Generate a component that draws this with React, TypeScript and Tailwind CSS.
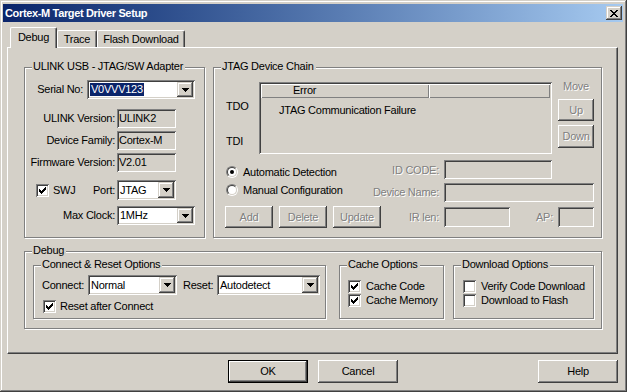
import type { ReactNode } from 'react';

// classic win2000 bevels
const raised = 'bg-[#d4d0c8] shadow-[inset_-1px_-1px_#404040,inset_1px_1px_#fff,inset_-2px_-2px_#808080]';
const raisedSoft = 'bg-[#d4d0c8] shadow-[inset_-1px_-1px_#404040,inset_1px_1px_#d4d0c8,inset_-2px_-2px_#808080,inset_2px_2px_#fff]';
const sunken = 'shadow-[inset_1px_1px_#808080,inset_-1px_-1px_#fff,inset_2px_2px_#404040,inset_-2px_-2px_#d4d0c8]';
const grayText = 'text-[#808080] [text-shadow:1px_1px_0_#fff]';

const CheckMark = () => (
  <svg width="7" height="7" viewBox="0 0 7 7" shapeRendering="crispEdges">
    {[2, 3, 4, 3, 2, 1, 0].map((y, x) => (
      <rect key={x} x={x} y={y} width="1" height="3" fill="#000" />
    ))}
  </svg>
);

const Arrow = () => (
  <svg width="7" height="4" viewBox="0 0 7 4" shapeRendering="crispEdges">
    {[0, 1, 2, 3].map((r) => (
      <rect key={r} x={r} y={r} width={7 - 2 * r} height="1" fill="#000" />
    ))}
  </svg>
);

const CloseGlyph = () => (
  <svg width="8" height="7" viewBox="0 0 8 7" shapeRendering="crispEdges">
    {[
      [0, 0, 2], [6, 0, 2],
      [1, 1, 2], [5, 1, 2],
      [2, 2, 4],
      [3, 3, 2],
      [2, 4, 4],
      [1, 5, 2], [5, 5, 2],
      [0, 6, 2], [6, 6, 2],
    ].map(([x, y, w], i) => (
      <rect key={i} x={x} y={y} width={w} height="1" fill="#000" />
    ))}
  </svg>
);

const Check = ({ checked = false }: { checked?: boolean }) => (
  <span className={`flex h-[13px] w-[13px] shrink-0 items-center justify-center bg-white ${sunken}`}>
    {checked && <CheckMark />}
  </span>
);

const Radio = ({ checked = false }: { checked?: boolean }) => (
  <span className="flex h-[12px] w-[12px] shrink-0 rounded-full border border-t-[#808080] border-l-[#808080] border-r-white border-b-white">
    <span className="flex flex-1 items-center justify-center rounded-full border border-t-[#404040] border-l-[#404040] border-r-[#d4d0c8] border-b-[#d4d0c8] bg-white">
      {checked && <span className="h-[4px] w-[4px] rounded-full bg-black" />}
    </span>
  </span>
);

const Group = ({ label, className, children }: { label: string; className: string; children?: ReactNode }) => (
  <div className={`relative shrink-0 border border-[#808080] shadow-[inset_1px_1px_#fff,1px_1px_#fff] ${className}`}>
    <span className="absolute left-[7px] top-[-8px] whitespace-nowrap bg-[#d4d0c8] pl-[1px] pr-[2px]">{label}</span>
    {children}
  </div>
);

const Combo = ({ className, children }: { className: string; children: ReactNode }) => (
  <div className={`flex shrink-0 items-stretch bg-white p-[2px] ${sunken} ${className}`}>
    <div className="flex flex-1 items-center overflow-hidden whitespace-nowrap pl-[1px]">{children}</div>
    <div className={`flex w-[16px] items-center justify-center ${raisedSoft}`}>
      <Arrow />
    </div>
  </div>
);

const Field = ({ className, children }: { className: string; children?: ReactNode }) => (
  <div className={`flex shrink-0 items-center bg-[#d4d0c8] pl-[2px] ${sunken} ${className}`}>{children}</div>
);

const Btn = ({ className, disabled = false, children }: { className: string; disabled?: boolean; children: ReactNode }) => (
  <div className={`flex shrink-0 items-center justify-center ${raised} ${disabled ? grayText : ''} ${className}`}>
    {children}
  </div>
);

export default function App() {
  return (
    <div className="h-[392px] w-[627px] overflow-hidden bg-[#d4d0c8] pl-[3px] pr-[4px] pt-[4px] font-['Liberation_Sans',Arial,sans-serif] text-[11px] leading-[13px] tracking-[-0.25px] text-black shadow-[inset_-1px_-1px_#404040,inset_1px_1px_#d4d0c8,inset_-2px_-2px_#808080,inset_2px_2px_#fff] select-none">
      {/* title bar */}
      <div className="flex h-[18px] items-center justify-between bg-gradient-to-r from-[#0a246a] to-[#a6caf0] pl-[2px]">
        <span className="font-bold tracking-[-0.35px] text-white">Cortex-M Target Driver Setup</span>
        <div className={`mr-[1px] flex h-[14px] w-[16px] items-center justify-center ${raisedSoft}`}>
          <CloseGlyph />
        </div>
      </div>

      {/* tabs */}
      <div className="ml-[7px] mt-[5px] flex h-[20px] items-end">
        <div className="relative z-10 -mb-[1px] flex h-[21px] w-[47px] justify-center rounded-tl-[2px] rounded-tr-[2px] border-l border-t border-r border-l-white border-t-white border-r-[#404040] bg-[#d4d0c8] pt-[3px] shadow-[inset_-1px_0_#808080]">
          Debug
        </div>
        <div className="flex h-[17px] w-[40px] justify-center rounded-tl-[2px] rounded-tr-[2px] border-l border-t border-r border-l-white border-t-white border-r-[#404040] pt-[2px] shadow-[inset_-1px_0_#808080]">
          Trace
        </div>
        <div className="flex h-[17px] w-[88px] justify-center rounded-tl-[2px] rounded-tr-[2px] border-l border-t border-r border-l-white border-t-white border-r-[#404040] pt-[2px] shadow-[inset_-1px_0_#808080]">
          Flash Download
        </div>
      </div>

      {/* tab panel */}
      <div className="ml-[4px] flex h-[307px] w-[611px] flex-col border-l border-t border-r border-b border-l-white border-t-white border-r-[#404040] border-b-[#404040] shadow-[inset_-1px_-1px_#808080]">
        <div className="ml-[16px] mt-[19px] flex">
          <Group label="ULINK USB - JTAG/SW Adapter" className="h-[171px] w-[181px]">
            <div className="mt-[12px] flex items-center">
              <span className="w-[58px] text-right">Serial No:</span>
              <Combo className="ml-[4px] h-[19px] w-[108px]">
                <span className="bg-[#0a246a] px-[1px] text-white">V0VVV123</span>
              </Combo>
            </div>
            <div className="mt-[10px] flex items-center">
              <span className="w-[90px] text-right">ULINK Version:</span>
              <Field className="ml-[2px] h-[19px] w-[59px]">ULINK2</Field>
            </div>
            <div className="mt-[3px] flex items-center">
              <span className="w-[90px] text-right">Device Family:</span>
              <Field className="ml-[2px] h-[19px] w-[59px]">Cortex-M</Field>
            </div>
            <div className="mt-[3px] flex items-center">
              <span className="w-[90px] whitespace-nowrap text-right">Firmware Version:</span>
              <Field className="ml-[2px] h-[19px] w-[59px]">V2.01</Field>
            </div>
            <div className="mt-[8px] flex items-center">
              <div className="flex w-[90px] items-center pl-[11px]">
                <Check checked />
                <span className="ml-[4px]">SWJ</span>
                <span className="ml-auto">Port:</span>
              </div>
              <Combo className="ml-[2px] h-[20px] w-[59px]">JTAG</Combo>
            </div>
            <div className="mt-[6px] flex items-center">
              <span className="w-[90px] text-right">Max Clock:</span>
              <Combo className="ml-[2px] h-[19px] w-[78px]">1MHz</Combo>
            </div>
          </Group>

          <Group label="JTAG Device Chain" className="ml-[8px] h-[171px] w-[389px]">
            <div className="mt-[14px] flex items-start">
              <div className="flex w-[45px] shrink-0 flex-col pl-[12px]">
                <span className="mt-[18px]">TDO</span>
                <span className="mt-[22px]">TDI</span>
              </div>
              <div className={`flex h-[72px] w-[293px] shrink-0 flex-col bg-[#d4d0c8] p-[2px] ${sunken}`}>
                <div className="flex h-[14px] shrink-0">
                  <div className="w-[168px] pl-[32px] shadow-[inset_1px_1px_#fff,inset_-1px_-1px_#808080]">Error</div>
                  <div className="flex-1 shadow-[inset_1px_1px_#fff,inset_-1px_-1px_#808080]" />
                </div>
                <div className="pl-[18px] pt-[6px]">JTAG Communication Failure</div>
              </div>
              <div className="-mt-[2px] ml-[6px] flex w-[36px] flex-col">
                <span className={`text-center ${grayText}`}>Move</span>
                <Btn className="mt-[6px] h-[22px]" disabled>Up</Btn>
                <Btn className="mt-[4px] h-[23px]" disabled>Down</Btn>
              </div>
            </div>

            <div className="mt-[6px] flex items-center">
              <div className="ml-[12px] mt-[5px] flex w-[144px] items-center">
                <Radio checked />
                <span className="ml-[5px]">Automatic Detection</span>
              </div>
              <span className={`mt-[2px] w-[69px] text-right ${grayText}`}>ID CODE:</span>
              <Field className="ml-[5px] h-[19px] w-[108px]" />
            </div>
            <div className="mt-[4px] flex items-center">
              <div className="mb-[5px] ml-[12px] flex w-[144px] items-center">
                <Radio />
                <span className="ml-[5px]">Manual Configuration</span>
              </div>
              <span className={`w-[69px] whitespace-nowrap text-right ${grayText}`}>Device Name:</span>
              <Field className="ml-[5px] h-[19px] w-[150px]" />
            </div>
            <div className="mt-[4px] flex items-center">
              <Btn className="ml-[11px] h-[22px] w-[48px]" disabled>Add</Btn>
              <Btn className="ml-[6px] h-[22px] w-[48px]" disabled>Delete</Btn>
              <Btn className="ml-[6px] h-[22px] w-[48px]" disabled>Update</Btn>
              <span className={`w-[58px] text-right ${grayText}`}>IR len:</span>
              <Field className="ml-[5px] h-[20px] w-[66px]" />
              <span className={`w-[43px] text-right ${grayText}`}>AP:</span>
              <Field className="ml-[5px] h-[20px] w-[36px]" />
            </div>
          </Group>
        </div>

        <Group label="Debug" className="ml-[16px] mt-[13px] h-[78px] w-[578px]">
          <div className="ml-[8px] mt-[13px] flex">
            <Group label="Connect & Reset Options" className="h-[54px] w-[293px]">
              <div className="mt-[9px] flex items-center pl-[8px]">
                <span className="w-[46px]">Connect:</span>
                <Combo className="h-[20px] w-[89px]">Normal</Combo>
                <span className="ml-[6px] w-[34px]">Reset:</span>
                <Combo className="h-[20px] w-[103px]">Autodetect</Combo>
              </div>
              <div className="mt-[5px] flex items-center pl-[9px]">
                <Check checked />
                <span className="ml-[4px]">Reset after Connect</span>
              </div>
            </Group>
            <Group label="Cache Options" className="ml-[13px] h-[54px] w-[105px]">
              <div className="mt-[14px] flex items-center pl-[8px]">
                <Check checked />
                <span className="ml-[5px]">Cache Code</span>
              </div>
              <div className="mt-[1px] flex items-center pl-[8px]">
                <Check checked />
                <span className="ml-[5px]">Cache Memory</span>
              </div>
            </Group>
            <Group label="Download Options" className="ml-[9px] h-[54px] w-[141px]">
              <div className="mt-[14px] flex items-center pl-[9px]">
                <Check />
                <span className="ml-[5px]">Verify Code Download</span>
              </div>
              <div className="mt-[1px] flex items-center pl-[9px]">
                <Check />
                <span className="ml-[5px]">Download to Flash</span>
              </div>
            </Group>
          </div>
        </Group>
      </div>

      {/* dialog buttons */}
      <div className="mt-[6px] flex">
        <div className="ml-[225px] flex h-[23px] w-[80px] border border-black">
          <Btn className="flex-1">OK</Btn>
        </div>
        <Btn className="ml-[10px] h-[23px] w-[80px]">Cancel</Btn>
        <Btn className="ml-[140px] h-[23px] w-[80px]">Help</Btn>
      </div>
    </div>
  );
}
